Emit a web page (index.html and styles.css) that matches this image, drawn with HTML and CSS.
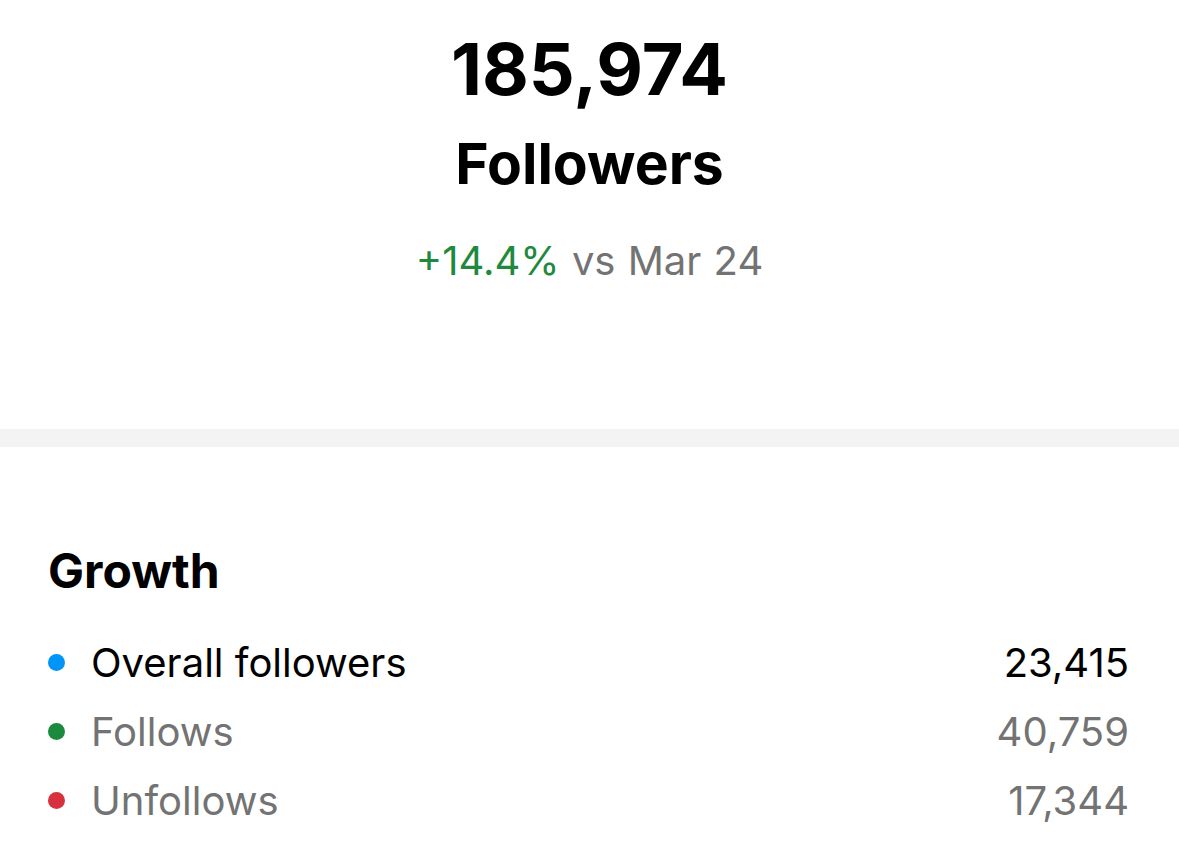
FILE: index.html
```html
<!DOCTYPE html>
<html lang="en">
<head>
<meta charset="utf-8">
<title>Followers</title>
<link rel="stylesheet" href="styles.css">
</head>
<body>
<section class="summary">
  <div class="total">185,974</div>
  <div class="label">Followers</div>
  <div class="change"><span class="up">+14.4%</span> vs Mar 24</div>
</section>
<div class="divider"></div>
<section class="growth">
  <h2 class="title">Growth</h2>
  <ul class="rows">
    <li class="row"><span class="dot dot-blue"></span><span class="name strong">Overall followers</span><span class="value strong">23,415</span></li>
    <li class="row"><span class="dot dot-green"></span><span class="name">Follows</span><span class="value">40,759</span></li>
    <li class="row"><span class="dot dot-red"></span><span class="name">Unfollows</span><span class="value">17,344</span></li>
  </ul>
</section>
</body>
</html>
```
FILE: styles.css
```css
html, body {
  margin: 0;
  padding: 0;
  background: #ffffff;
}
body {
  font-family: Inter, "Liberation Sans", Arial, sans-serif;
  color: #000;
  width: 1179px;
}
.summary {
  text-align: center;
  padding: 27px 0 144px;
}
.total {
  font-size: 72px;
  font-weight: 700;
  line-height: 84px;
}
.label {
  margin-top: 19px;
  font-size: 57px;
  font-weight: 700;
  line-height: 68px;
}
.change {
  margin-top: 39px;
  font-size: 40px;
  line-height: 48px;
  color: #737373;
  word-spacing: 1px;
}
.up {
  color: #1f8a3d;
}
.divider {
  height: 18px;
  background: #f3f3f3;
}
.growth {
  padding: 95px 50px 0 48px;
}
.title {
  margin: 0;
  font-size: 48px;
  font-weight: 700;
  line-height: 58px;
}
.rows {
  list-style: none;
  margin: 28px 0 0;
  padding: 0;
}
.row {
  display: flex;
  align-items: center;
  height: 69px;
  font-size: 40px;
  color: #737373;
}
.dot {
  width: 17px;
  height: 17px;
  border-radius: 50%;
  margin-right: 26px;
  flex: none;
}
.dot-blue { background: #0095f6; }
.dot-green { background: #1a8a3c; }
.dot-red { background: #d7303f; }
.name {
  flex: 1;
}
.strong {
  color: #000;
}
.value {
  text-align: right;
}
```
